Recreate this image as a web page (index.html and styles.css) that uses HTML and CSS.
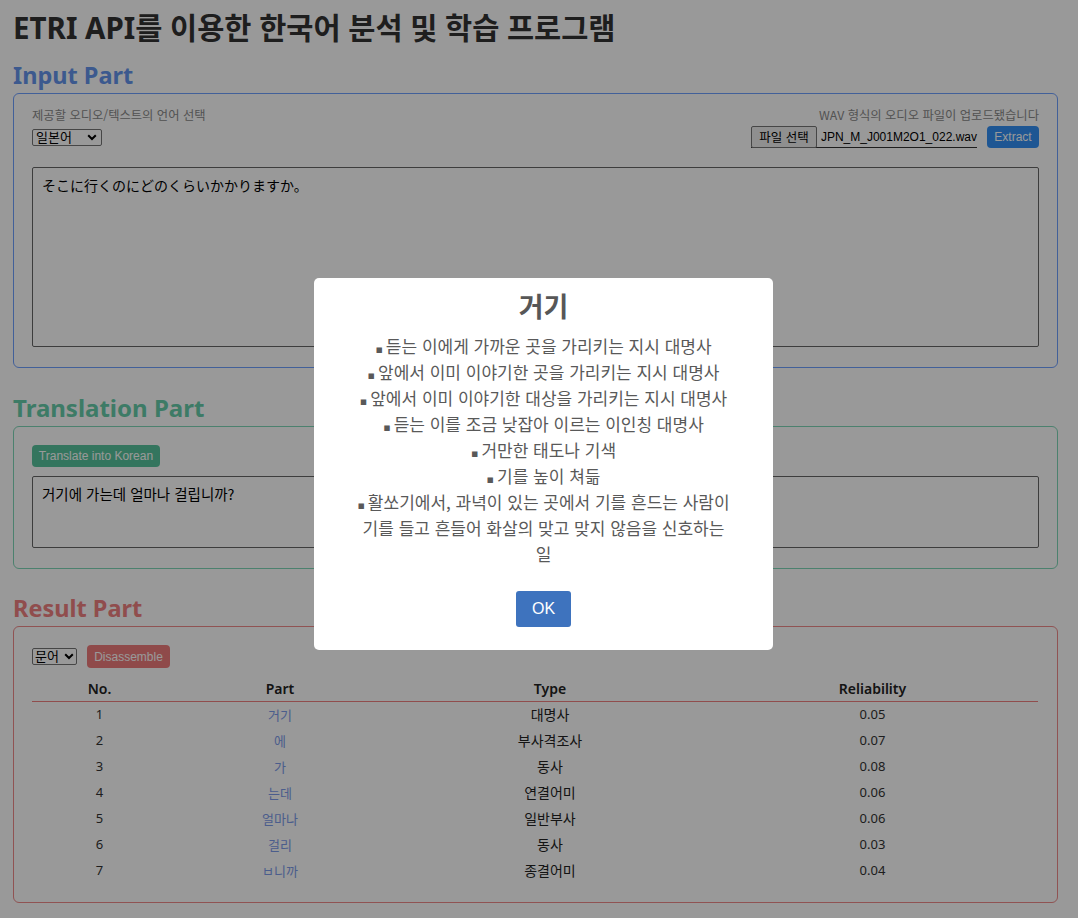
FILE: index.html
```html
<!DOCTYPE html>
<html lang="ko">
<head>
<meta charset="utf-8">
<title>ETRI API를 이용한 한국어 분석 및 학습 프로그램</title>
<link rel="stylesheet" href="styles.css">
</head>
<body>
<div class="page">
  <h1 class="title">ETRI API를 이용한 한국어 분석 및 학습 프로그램</h1>

  <h2 class="part-title part-input">Input Part</h2>
  <section class="box box-input">
    <div class="hint-row">
      <span class="hint">제공할 오디오/텍스트의 언어 선택</span>
      <span class="hint">WAV 형식의 오디오 파일이 업로드됐습니다</span>
    </div>
    <div class="control-row">
      <span class="sel-wrap sel-lang">
        <select class="sel"><option>일본어</option></select>
        <svg class="chev" width="10" height="7" viewBox="0 0 10 7"><path d="M1.2 1.2 L5 5 L8.8 1.2" fill="none" stroke="#000" stroke-width="2"/></svg>
      </span>
      <div class="file-group">
        <span class="file-input"><span class="file-btn">파일 선택</span><span class="file-name">JPN_M_J001M2O1_022.wav</span></span>
        <button class="btn btn-blue">Extract</button>
      </div>
    </div>
    <textarea class="ta ta-input" readonly>そこに行くのにどのくらいかかりますか。</textarea>
  </section>

  <h2 class="part-title part-trans">Translation Part</h2>
  <section class="box box-trans">
    <button class="btn btn-green">Translate into Korean</button>
    <textarea class="ta ta-trans" readonly>거기에 가는데 얼마나 걸립니까?</textarea>
  </section>

  <h2 class="part-title part-result">Result Part</h2>
  <section class="box box-result">
    <div class="result-controls">
      <span class="sel-wrap sel-style">
        <select class="sel"><option>문어</option></select>
        <svg class="chev" width="10" height="7" viewBox="0 0 10 7"><path d="M1.2 1.2 L5 5 L8.8 1.2" fill="none" stroke="#000" stroke-width="2"/></svg>
      </span>
      <button class="btn btn-red">Disassemble</button>
    </div>
    <table class="result-table">
      <colgroup>
        <col class="c-no"><col class="c-part"><col class="c-type"><col class="c-rel">
      </colgroup>
      <thead>
        <tr><th>No.</th><th>Part</th><th>Type</th><th>Reliability</th></tr>
      </thead>
      <tbody>
        <tr><td class="num">1</td><td class="part">거기</td><td class="type">대명사</td><td class="num">0.05</td></tr>
        <tr><td class="num">2</td><td class="part">에</td><td class="type">부사격조사</td><td class="num">0.07</td></tr>
        <tr><td class="num">3</td><td class="part">가</td><td class="type">동사</td><td class="num">0.08</td></tr>
        <tr><td class="num">4</td><td class="part">는데</td><td class="type">연결어미</td><td class="num">0.06</td></tr>
        <tr><td class="num">5</td><td class="part">얼마나</td><td class="type">일반부사</td><td class="num">0.06</td></tr>
        <tr><td class="num">6</td><td class="part">걸리</td><td class="type">동사</td><td class="num">0.03</td></tr>
        <tr><td class="num">7</td><td class="part">ㅂ니까</td><td class="type">종결어미</td><td class="num">0.04</td></tr>
      </tbody>
    </table>
  </section>
</div>

<div class="overlay"></div>
<div class="modal">
  <h2 class="modal-title">거기</h2>
  <p class="modal-text"><span class="b">▪</span>듣는 이에게 가까운 곳을 가리키는 지시 대명사<br><span class="b">▪</span>앞에서 이미 이야기한 곳을 가리키는 지시 대명사<br><span class="b">▪</span>앞에서 이미 이야기한 대상을 가리키는 지시 대명사<br><span class="b">▪</span>듣는 이를 조금 낮잡아 이르는 이인칭 대명사<br><span class="b">▪</span>거만한 태도나 기색<br><span class="b">▪</span>기를 높이 쳐듦<br><span class="b">▪</span>활쏘기에서, 과녁이 있는 곳에서 기를 흔드는 사람이<br>기를 들고 흔들어 화살의 맞고 맞지 않음을 신호하는<br>일</p>
  <button class="ok-btn">OK</button>
</div>
</body>
</html>
```

FILE: styles.css
```css
* { box-sizing: border-box; }
html, body { margin: 0; padding: 0; background: #ffffff; }
body {
  font-family: "Noto Sans", "Noto Sans CJK KR", sans-serif;
  color: #333333;
}
.page {
  margin-left: 13px;
  width: 1045px;
  padding-top: 10px;
}
.title {
  margin: 0;
  font-size: 29.5px;
  line-height: 36px;
  font-weight: 700;
  color: #333333;
}
.part-title {
  margin: 14px 0 3px;
  font-size: 23.5px;
  line-height: 30px;
  font-weight: 700;
}
.part-input { color: #6495ed; }
.part-trans { color: #66cdaa; margin-top: 25px; font-size: 24px; }
.part-result { color: #f08080; margin-top: 24px; }

.box {
  border-width: 1px;
  border-style: solid;
  border-radius: 6px;
  padding: 13px 18px 20px;
}
.box-input { border-color: #6fa0ff; }
.box-trans { border-color: #7fd8b8; padding-top: 18px; }
.box-result { border-color: #f08a8a; padding-top: 18px; padding-bottom: 19px; }

.hint-row {
  display: flex;
  justify-content: space-between;
  height: 16px;
  align-items: center;
}
.hint {
  font-family: "Noto Sans CJK KR", sans-serif;
  font-size: 12.3px;
  color: #8a8a8a;
  line-height: 16px;
}
.control-row {
  margin-top: 3px;
  height: 22px;
  display: flex;
  justify-content: space-between;
  align-items: center;
}
.sel-wrap {
  position: relative;
  display: inline-block;
  height: 17px;
}
.sel {
  appearance: none;
  -webkit-appearance: none;
  display: block;
  width: 100%;
  height: 17px;
  font-family: "Liberation Sans", "Noto Sans CJK KR", sans-serif;
  font-size: 13px;
  line-height: 15px;
  padding: 0 14px 0 3px;
  border: 1px solid #767676;
  border-radius: 2px;
  background: #ffffff;
  color: #000000;
}
.chev {
  position: absolute;
  right: 4px;
  top: 5px;
  pointer-events: none;
}
.sel-lang { width: 70px; margin-top: 1px; }
.sel-lang .chev { right: 5px; }
.sel-style { width: 45px; }
.sel-style .sel { padding-left: 2px; }
.sel-style .chev { right: 3px; }

.file-group {
  display: flex;
  align-items: center;
  gap: 10px;
}
.file-input {
  display: flex;
  align-items: center;
  height: 22px;
  border-bottom: 1px solid #333333;
}
.file-btn {
  flex-shrink: 0;
  display: inline-flex;
  align-items: center;
  justify-content: center;
  width: 66px;
  height: 22px;
  font-family: "Noto Sans CJK KR", sans-serif;
  font-size: 12.5px;
  color: #000000;
  background: #efefef;
  border: 1px solid #767676;
  border-radius: 2px;
}
.file-name {
  flex-shrink: 0;
  margin-left: 4px;
  font-family: "Liberation Sans", sans-serif;
  font-size: 12px;
  color: #000000;
}
.btn {
  height: 22px;
  padding: 0;
  border: none;
  border-radius: 4px;
  font-family: "Liberation Sans", sans-serif;
  font-size: 12px;
  color: #ffffff;
  line-height: 22px;
}
.btn-blue { background: #3290f5; width: 52px; }
.btn-green { background: #58c49d; width: 128px; display: block; }
.btn-red { background: #ee7c7c; width: 83px; height: 23px; }

.ta {
  display: block;
  width: 100%;
  resize: none;
  border: 1px solid #666666;
  border-radius: 2px;
  background: #ffffff;
  color: #000000;
  padding: 7px 9px;
  line-height: 20px;
  margin: 0;
}
.ta-input {
  margin-top: 19px;
  height: 180px;
  font-family: "Noto Sans CJK JP", sans-serif;
  font-size: 14px;
}
.ta-trans {
  margin-top: 9px;
  height: 72px;
  font-family: "Noto Sans CJK KR", sans-serif;
  font-size: 14.5px;
}

.result-controls {
  display: flex;
  align-items: center;
  gap: 10px;
  height: 23px;
}
.result-table {
  margin-top: 9px;
  width: 1006px;
  border-collapse: collapse;
  table-layout: fixed;
}
.c-no { width: 135px; }
.c-part { width: 226px; }
.c-type { width: 314px; }
.c-rel { width: 331px; }
.result-table th {
  height: 24px;
  padding: 0;
  font-size: 14px;
  font-weight: 600;
  color: #222222;
  text-align: center;
  border-bottom: 1px solid #f08080;
  vertical-align: middle;
}
.result-table td {
  height: 26px;
  padding: 0;
  text-align: center;
  vertical-align: middle;
  font-size: 13px;
  color: #333333;
}
.result-table td.part {
  font-family: "Noto Sans CJK KR", sans-serif;
  color: #7d9bea;
}
.result-table td.type {
  font-family: "Noto Sans CJK KR", sans-serif;
  font-size: 14px;
  color: #222222;
}

.overlay {
  position: fixed;
  inset: 0;
  background: rgba(0, 0, 0, 0.4);
}
.modal {
  position: fixed;
  left: 314px;
  top: 278px;
  width: 459px;
  background: #ffffff;
  border-radius: 5px;
  padding: 10px 12px 23px;
  text-align: center;
}
.modal-title {
  margin: 0;
  font-family: "Noto Sans CJK KR", sans-serif;
  font-size: 27px;
  line-height: 36px;
  font-weight: 700;
  color: #575757;
}
.modal-text {
  margin: 9px 0 0;
  font-family: "Noto Sans CJK KR", sans-serif;
  font-size: 17px;
  line-height: 26px;
  color: #595959;
}
.modal-text .b {
  font-family: "DejaVu Sans", sans-serif;
  font-size: 11px;
  line-height: 0;
  margin-right: 3px;
}
.ok-btn {
  display: block;
  margin: 24px auto 0;
  width: 55px;
  height: 36px;
  border: none;
  border-radius: 3px;
  background: #3e73be;
  color: #ffffff;
  font-family: "Liberation Sans", sans-serif;
  font-size: 16px;
}
```
